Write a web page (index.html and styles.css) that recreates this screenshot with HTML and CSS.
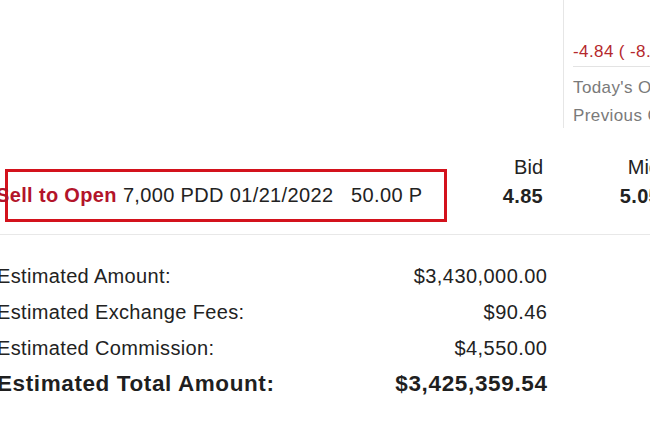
FILE: index.html
```html
<!DOCTYPE html>
<html>
<head>
<meta charset="utf-8">
<link rel="stylesheet" href="styles.css">
</head>
<body>
<div class="page">
  <div class="top">
    <div class="top-left"></div>
    <div class="quote-panel">
      <div class="q-cut">+/- Change</div>
      <div class="q-change">-4.84 ( -8.82% )</div>
      <div class="q-divider"></div>
      <div class="q-label">Today's Open</div>
      <div class="q-label">Previous Close</div>
    </div>
  </div>

  <div class="order-row">
    <div class="order-box">
      <span class="action">Sell to Open</span>
      <span class="desc">7,000 PDD 01/21/2022&nbsp;&nbsp; 50.00 P</span>
    </div>
    <div class="price-col bid">
      <div class="price-label">Bid</div>
      <div class="price-value">4.85</div>
    </div>
    <div class="price-col mid">
      <div class="price-label">Mid</div>
      <div class="price-value">5.05</div>
    </div>
  </div>

  <div class="summary">
    <div class="sum-row">
      <span class="sum-label">Estimated Amount:</span>
      <span class="sum-value">$3,430,000.00</span>
    </div>
    <div class="sum-row">
      <span class="sum-label">Estimated Exchange Fees:</span>
      <span class="sum-value">$90.46</span>
    </div>
    <div class="sum-row">
      <span class="sum-label">Estimated Commission:</span>
      <span class="sum-value">$4,550.00</span>
    </div>
    <div class="sum-row total">
      <span class="sum-label">Estimated Total Amount:</span>
      <span class="sum-value">$3,425,359.54</span>
    </div>
  </div>
</div>
</body>
</html>
```

FILE: styles.css
```css
html, body {
  margin: 0;
  padding: 0;
  background: #ffffff;
  width: 650px;
  height: 424px;
  overflow: hidden;
}

.page {
  font-family: "Liberation Sans", Arial, sans-serif;
  color: #222222;
  width: 720px;
  margin-left: -3px;
}

.top {
  display: flex;
  height: 128px;
}

.top-left {
  width: 566px;
  flex: none;
}

.quote-panel {
  border-left: 1px solid #e6e6e6;
  padding-left: 9px;
  width: 200px;
  white-space: nowrap;
  margin-top: -20px;
  height: 148px;
  font-size: 17px;
  letter-spacing: 0.4px;
}

.q-cut {
  line-height: 24px;
  height: 24px;
  color: #b7262b;
}

.q-change {
  line-height: 20px;
  color: #b5282d;
  margin-top: 38px;
}

.q-divider {
  border-top: 1px solid #e3e3e3;
  margin-top: 4px;
  margin-bottom: 7px;
}

.q-label {
  line-height: 28px;
  color: #7a7a7a;
}

.order-row {
  display: flex;
  align-items: flex-start;
  border-bottom: 1px solid #e8e8e8;
  padding-bottom: 12px;
  white-space: nowrap;
}

.order-box {
  margin-top: 41px;
  margin-left: 8px;
  width: 442px;
  height: 53px;
  box-sizing: border-box;
  border: 3px solid #d3121c;
  display: flex;
  align-items: center;
  font-size: 20px;
  letter-spacing: 0.35px;
}

.action {
  color: #b3142a;
  font-weight: bold;
  margin-left: -12px;
  margin-right: 6px;
}

.desc {
  color: #222222;
}

.price-col {
  display: flex;
  flex-direction: column;
  align-items: flex-end;
  font-size: 20px;
  margin-top: 25px;
  width: 60px;
}

.bid {
  margin-left: 36px;
}

.mid {
  margin-left: 57px;
}

.price-label {
  line-height: 28px;
  color: #222222;
}

.price-value {
  font-weight: bold;
  line-height: 30px;
  letter-spacing: 0.3px;
}

.summary {
  padding-top: 23px;
  width: 550px;
}

.sum-row {
  display: flex;
  justify-content: space-between;
  font-size: 20px;
  line-height: 36px;
  height: 36px;
  letter-spacing: 0.35px;
}

.sum-row .sum-value {
  letter-spacing: 0.45px;
  margin-right: -0.45px;
}

.sum-row.total {
  font-size: 22.5px;
  font-weight: bold;
  color: #1f1f1f;
  letter-spacing: 0.6px;
}

.sum-row.total .sum-value {
  letter-spacing: 0.65px;
  margin-right: -0.65px;
}
```
